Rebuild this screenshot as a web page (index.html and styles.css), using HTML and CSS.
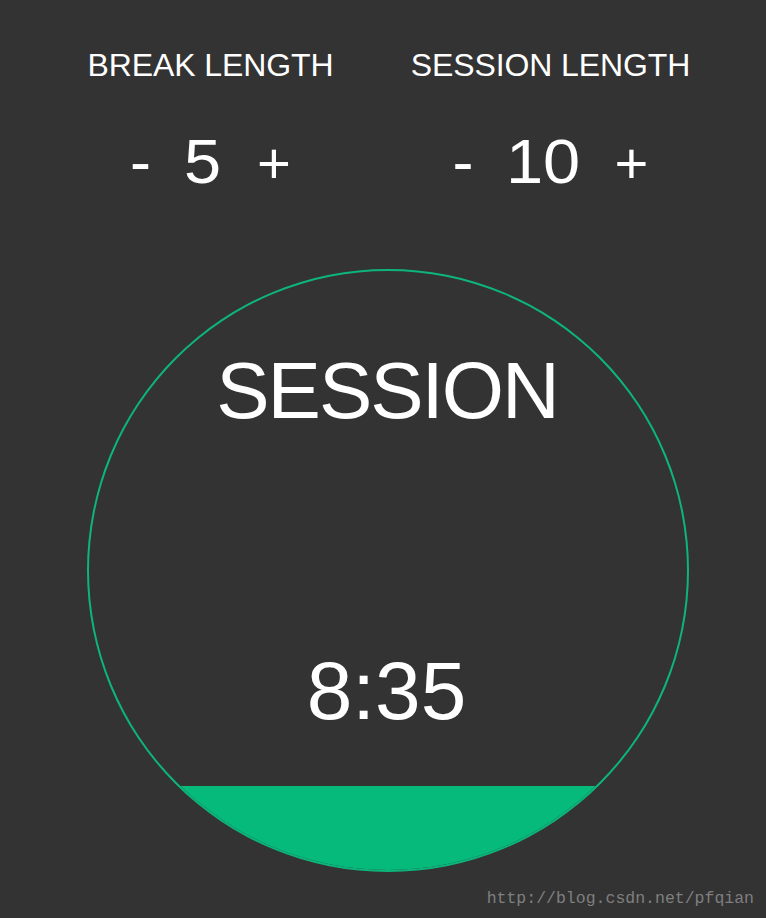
FILE: index.html
```html
<!DOCTYPE html>
<html>
<head>
<meta charset="utf-8">
<link rel="stylesheet" href="styles.css">
</head>
<body>
<div class="page">
  <div class="settings">
    <div class="setting">
      <div class="label">BREAK LENGTH</div>
      <div class="control">
        <span class="btn minus">-</span>
        <span class="value">5</span>
        <span class="btn plus">+</span>
      </div>
    </div>
    <div class="setting">
      <div class="label">SESSION LENGTH</div>
      <div class="control">
        <span class="btn minus">-</span>
        <span class="value">10</span>
        <span class="btn plus">+</span>
      </div>
    </div>
  </div>
  <div class="clock">
    <div class="title">SESSION</div>
    <div class="time">8:35</div>
    <div class="fill"></div>
  </div>
  <div class="watermark">http://blog.csdn.net/pfqian</div>
</div>
</body>
</html>
```
FILE: styles.css
```css
html, body {
  margin: 0;
  padding: 0;
  background: #333333;
}
.page {
  position: relative;
  width: 766px;
  height: 918px;
  overflow: hidden;
  font-family: "Liberation Sans", Arial, sans-serif;
  color: #ffffff;
}
.settings {
  display: flex;
  justify-content: center;
  padding-top: 49px;
  padding-right: 5px;
}
.setting {
  width: 340px;
  display: flex;
  flex-direction: column;
  align-items: center;
}
.label {
  font-size: 32px;
  line-height: 32px;
  letter-spacing: -0.1px;
  white-space: nowrap;
}
.control {
  display: flex;
  align-items: baseline;
  gap: 34px;
  margin-top: 49px;
  font-size: 63px;
  line-height: 63px;
}
.btn {
  cursor: pointer;
}
.value {
  transform: scaleX(1.06);
}
.plus {
  font-size: 58px;
  margin-left: 3px;
}
.clock {
  margin-top: 75px;
  margin-left: 87px;
  width: 598px;
  height: 599px;
  border: 2px solid #0db57d;
  border-radius: 50%;
  overflow: hidden;
  display: flex;
  flex-direction: column;
  align-items: center;
  box-sizing: content-box;
}
.title {
  margin-top: 80px;
  font-size: 80px;
  line-height: 80px;
  letter-spacing: -2px;
  margin-right: 2px;
}
.time {
  margin-top: 220px;
  font-size: 82px;
  line-height: 80px;
  margin-right: 3px;
}
.fill {
  margin-top: auto;
  width: 100%;
  height: 84px;
  background: #05ba7b;
  flex-shrink: 0;
}
.watermark {
  position: absolute;
  right: 12px;
  bottom: 9px;
  font-family: "Liberation Mono", "DejaVu Sans Mono", monospace;
  font-size: 16.5px;
  line-height: 20px;
  color: #7f7f7f;
}
```
